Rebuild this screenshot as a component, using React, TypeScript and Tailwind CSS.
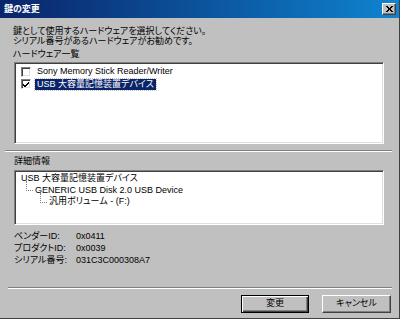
import React from 'react';

const sunken =
  'border border-t-[#808080] border-l-[#808080] border-b-white border-r-white shadow-[inset_1px_1px_0_#404040,inset_-1px_-1px_0_#dfdfdf]';

const Etched: React.FC = () => (
  <div className="h-[2px] border-t border-t-[#808080] border-b border-b-white" />
);

const CheckBox: React.FC<{ checked?: boolean }> = ({ checked }) => (
  <span className={`w-[10px] h-[10px] bg-white flex items-center justify-center ${sunken}`}>
    {checked && (
      <svg width="7" height="7" viewBox="0 0 7 7">
        <path d="M0 3 L2 5 L6 1 M0 4 L2 6 L6 2" stroke="#000" strokeWidth="1" fill="none" />
      </svg>
    )}
  </span>
);

const TreeElbow: React.FC = () => (
  <span className="w-[7px] h-[10px] mr-[2px] border-l border-b border-dotted border-[#808080] -translate-y-[4px]" />
);

const App: React.FC = () => {
  return (
    <div
      className="w-[400px] h-[319px] bg-[#c0c0c0] flex flex-col border-r border-b border-r-[#404040] border-b-[#404040] text-[9px] text-black [font-feature-settings:'palt']"
      style={{ fontFamily: '"Liberation Sans", "Noto Sans CJK JP", sans-serif' }}
    >
      {/* タイトルバー */}
      <div className="h-[18px] flex items-center justify-between pl-[4px] pr-[3px] bg-gradient-to-r from-[#0a246a] to-[#1084d0]">
        <span className="text-white font-bold text-[9px] leading-none">鍵の変更</span>
        <button className="w-[14px] h-[12px] bg-[#c0c0c0] flex items-center justify-center border border-t-white border-l-white border-b-[#404040] border-r-[#404040] shadow-[inset_-1px_-1px_0_#808080]">
          <svg width="7" height="6" viewBox="0 0 7 6">
            <path d="M0 0 L6 6 M1 0 L7 6 M6 0 L0 6 M7 0 L1 6" stroke="#000" strokeWidth="1" fill="none" />
          </svg>
        </button>
      </div>

      <div className="flex-1 flex flex-col pt-[8px] pr-[7px]">
        <div className="pl-[13px] pr-[8px] leading-[10px]">
          <p>鍵として使用するハードウェアを選択してください。</p>
          <p>シリアル番号があるハードウェアがお勧めです。</p>
          <p className="mt-[3px] mb-[3px]">ハードウェア一覧</p>
        </div>

        {/* ハードウェア一覧 */}
        <div className="pl-[14px]">
          <div className={`w-[370px] h-[82px] bg-white pt-[3px] pl-[6px] ${sunken}`}>
            <div className="h-[12px] flex items-center gap-[5px]">
              <CheckBox />
              <span className="px-[1px]">Sony Memory Stick Reader/Writer</span>
            </div>
            <div className="h-[12px] flex items-center gap-[4px]">
              <CheckBox checked />
              <span className="px-[2px] h-[11px] leading-[11px] bg-[#0a246a] text-white outline-1 outline-dotted outline-[#c0c0c0]">
                USB 大容量記憶装置デバイス
              </span>
            </div>
          </div>
        </div>

        <div className="mt-[6px] pl-[5px]">
          <Etched />
        </div>

        <p className="pl-[14px] mt-[4px] mb-[4px] leading-[10px]">詳細情報</p>

        {/* 詳細情報 */}
        <div className="pl-[14px]">
          <div className={`w-[370px] h-[55px] bg-white pt-[2px] pl-[6px] leading-[11.5px] ${sunken}`}>
            <div>USB 大容量記憶装置デバイス</div>
            <div className="flex items-center pl-[5px]">
              <TreeElbow />
              <span>GENERIC USB Disk 2.0 USB Device</span>
            </div>
            <div className="flex items-center pl-[19px]">
              <TreeElbow />
              <span>汎用ボリューム - (F:)</span>
            </div>
          </div>
        </div>

        <div className="pl-[14px] mt-[5px] grid grid-cols-[62px_1fr] leading-[12px]">
          <span>ベンダーID:</span>
          <span>0x0411</span>
          <span>プロダクトID:</span>
          <span>0x0039</span>
          <span>シリアル番号:</span>
          <span>031C3C000308A7</span>
        </div>

        <div className="mt-[21px] pl-[8px]">
          <Etched />
        </div>

        <div className="mt-[6px] flex justify-end gap-[13px] pr-[1px]">
          <button className="w-[68px] h-[18px] flex items-center justify-center border border-black shadow-[inset_1px_1px_0_#fff,inset_-1px_-1px_0_#404040,inset_-2px_-2px_0_#808080]">
            変更
          </button>
          <button className="w-[69px] h-[18px] flex items-center justify-center border border-t-white border-l-white border-b-[#404040] border-r-[#404040] shadow-[inset_-1px_-1px_0_#808080]">
            キャンセル
          </button>
        </div>
      </div>
    </div>
  );
};

export default App;
